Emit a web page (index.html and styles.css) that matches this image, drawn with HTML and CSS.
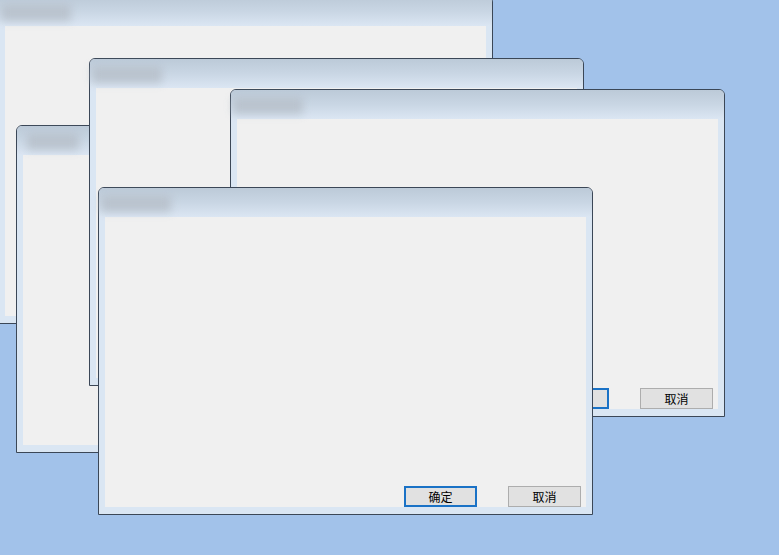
FILE: index.html
```html
<!DOCTYPE html>
<html>
<head>
<meta charset="utf-8">
<link rel="stylesheet" href="styles.css">
</head>
<body>
<div class="desktop">
  <div class="win win-a">
    <div class="titlebar"><div class="title-blur"></div></div>
    <div class="frame"><div class="client"></div></div>
  </div>
  <div class="win win-c">
    <div class="titlebar"><div class="title-blur short"></div></div>
    <div class="frame"><div class="client"></div></div>
  </div>
  <div class="win win-b">
    <div class="titlebar"><div class="title-blur"></div></div>
    <div class="frame"><div class="client"></div></div>
  </div>
  <div class="win win-e">
    <div class="titlebar"><div class="title-blur"></div></div>
    <div class="frame">
      <div class="client">
        <div class="buttons">
          <button class="btn default">确定</button>
          <button class="btn">取消</button>
        </div>
      </div>
    </div>
  </div>
  <div class="win win-d">
    <div class="titlebar"><div class="title-blur"></div></div>
    <div class="frame">
      <div class="client">
        <div class="buttons">
          <button class="btn default">确定</button>
          <button class="btn">取消</button>
        </div>
      </div>
    </div>
  </div>
</div>
</body>
</html>
```

FILE: styles.css
```css
html, body {
  margin: 0;
  padding: 0;
}
body {
  background: #a2c2ea;
  font-family: "Noto Sans CJK SC", "Noto Sans", sans-serif;
}
.desktop {
  position: relative;
  width: 779px;
  height: 555px;
  overflow: hidden;
  background: #a2c2ea;
}
.win {
  position: absolute;
  width: 493px;
  height: 326px;
  border: 1px solid #3b4757;
  border-radius: 6px 6px 0 0;
  display: flex;
  flex-direction: column;
  background: #dae6f3;
  box-sizing: content-box;
}
.win-a { left: -2px; top: -4px; }
.win-c { left: 16px; top: 125px; }
.win-b { left: 89px; top: 58px; }
.win-e { left: 230px; top: 89px; }
.win-d { left: 98px; top: 187px; }

.titlebar {
  position: relative;
  height: 29px;
  flex: none;
  border-radius: 5px 5px 0 0;
  background: linear-gradient(to bottom, #bccad8 0%, #c9d6e4 50%, #dbe6f3 100%);
}
.title-blur {
  position: absolute;
  left: 2px;
  top: 7px;
  width: 70px;
  height: 17px;
  background: #b7c0ca;
  filter: blur(4px);
  opacity: 0.85;
}
.title-blur.short {
  left: 10px;
  width: 52px;
}
.frame {
  flex: 1;
  display: flex;
  padding: 0 6px 7px 6px;
  background: #dae6f3;
}
.client {
  flex: 1;
  background: #f0f0f0;
  display: flex;
  flex-direction: column;
  justify-content: flex-end;
  padding: 0 5px 0 0;
}
.buttons {
  display: flex;
  justify-content: flex-end;
  gap: 31px;
}
.btn {
  width: 73px;
  height: 21px;
  margin: 0;
  padding: 0;
  box-sizing: border-box;
  border: 1px solid #adadad;
  background: #e1e1e1;
  font-family: "Noto Sans CJK SC", sans-serif;
  font-size: 12px;
  line-height: 17px;
  color: #000;
}
.btn.default {
  border: 2px solid #1a72c6;
  line-height: 15px;
}
```
